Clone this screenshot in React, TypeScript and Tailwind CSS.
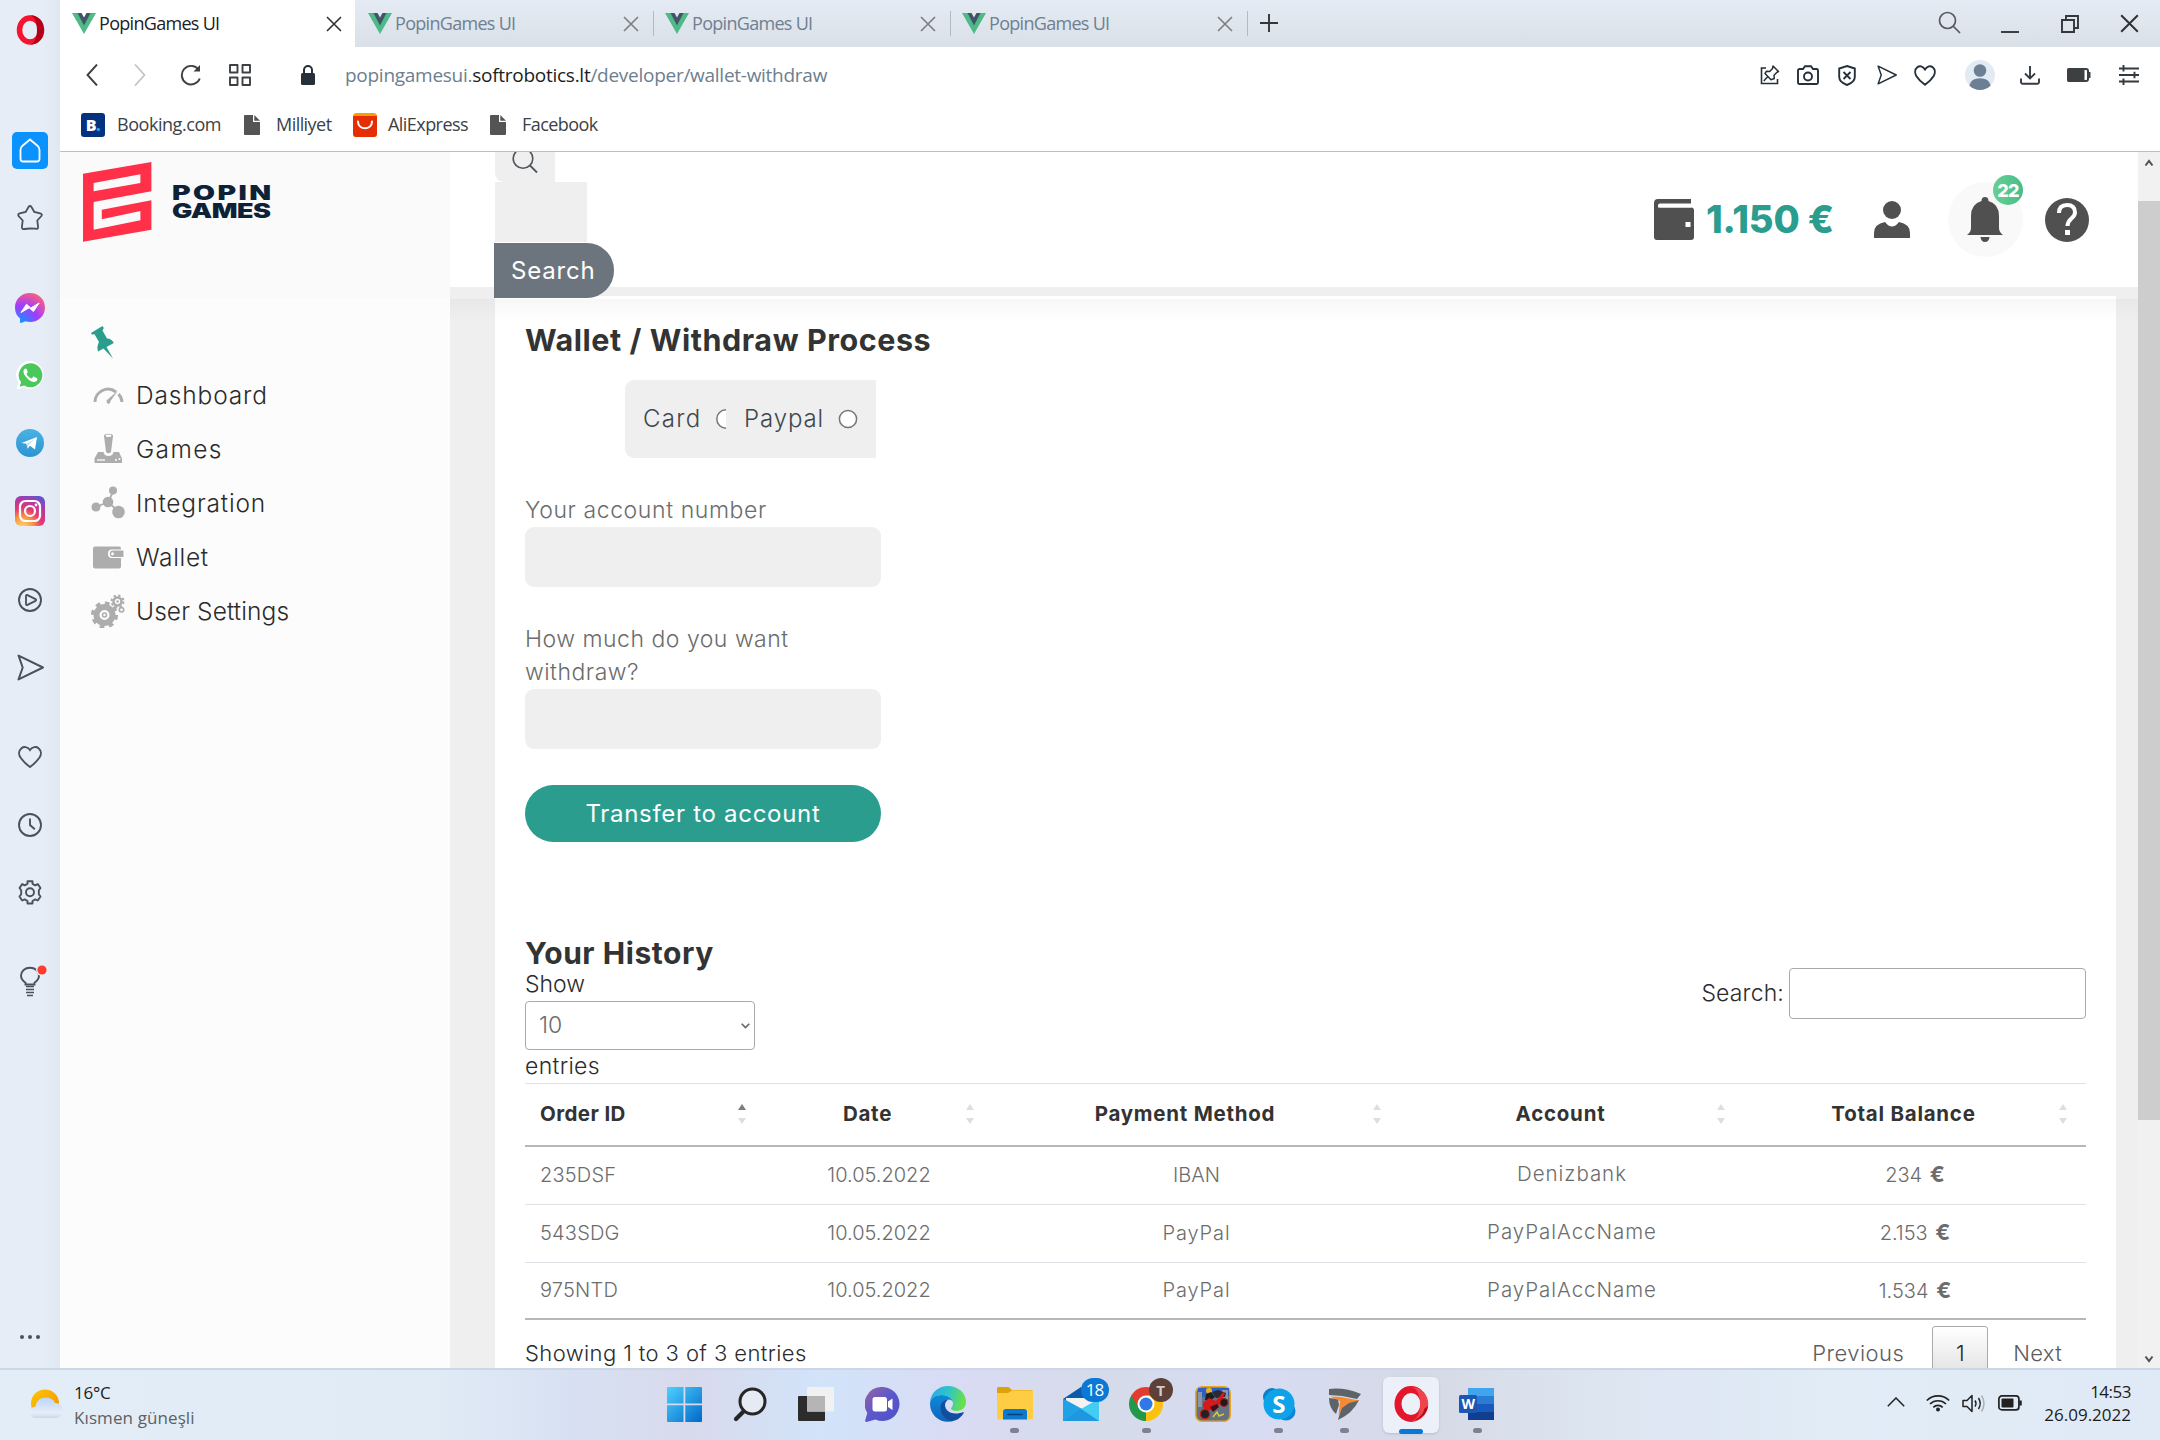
import React from "react";

type P = { w: number; h: number; vb?: string; className?: string; children: React.ReactNode };
const Svg = ({ w, h, vb, className = "", children }: P) => (
  <svg width={w} height={h} viewBox={vb ?? `0 0 ${w} ${h}`} className={`shrink-0 ${className}`} fill="none">
    {children}
  </svg>
);

const Vue = () => (
  <Svg w={24} h={21}>
    <path d="M0 0 12 21 24 0h-6l-6 10L6 0z" fill="#4dba87" />
    <path d="M5.500 0L12 12.500 18.500 0h-4L12 4.500 9.500 0z" fill="#435466" />
  </Svg>
);
const Close = ({ c, w = 1.6, s = 16 }: { c: string; w?: number; s?: number }) => (
  <Svg w={s} h={s} vb="0 0 16 16">
    <path d="M1 1l14 14M15 1L1 15" stroke={c} strokeWidth={w} />
  </Svg>
);
const FileIcon = ({ className = "" }: { className?: string }) => (
  <Svg w={16} h={20} className={className}>
    <path d="M1 0h8v7h7v12a1 1 0 0 1-1 1H1a1 1 0 0 1-1-1V1a1 1 0 0 1 1-1z" fill="#545454" />
    <path d="M10.300 0L16 5.800h-5.700z" fill="#545454" />
  </Svg>
);
const Plane = ({ s, w, c, className = "" }: { s: number; w: number; c: string; className?: string }) => (
  <Svg w={s} h={s} vb="0 0 26 26" className={className}>
    <path d="M1.500 1.500L25 13 1.500 24.500 5.500 13z" stroke={c} strokeWidth={w} strokeLinejoin="round" />
  </Svg>
);

function SideBar() {
  const c = "#48515d";
  return (
    <aside className="flex h-[1368px] w-[60px] shrink-0 flex-col items-center bg-linear-to-r from-[#e6edf6] from-70% to-[#dfe7f0]">
      <Svg w={30} h={30} className="mt-[15px]">
        <ellipse cx="15" cy="15" rx="10.500" ry="12" stroke="#f5132e" strokeWidth="5.500" />
        <path d="M15 .3c19 0 19 29.400 0 29.400 4.500-1 7-7 7-14.700S19.500 1.300 15 .3z" fill="#b5001a" />
      </Svg>
      <div className="mt-[87px] flex h-[37px] w-9 items-center justify-center rounded-[5px] bg-[#0a93ff]">
        <Svg w={22} h={25}>
          <path d="M11 1.500l7.500 6.300Q20.500 9.500 20.500 12v9a2.500 2.500 0 0 1-2.500 2.500H4A2.500 2.500 0 0 1 1.500 21v-9q0-2.500 2-4.200z" stroke="#fff" strokeWidth="1.800" />
        </Svg>
      </div>
      <Svg w={26} h={26} className="mt-9">
        <path d="M11.500 2q1.500-2 3 0l2.800 5 5.900 1.300q2.500.8 1.200 2.700L20.300 15.500l.8 6.500q0 2.500-2.500 1.700L13 23.500l-5.600.5q-2.500.5-2.500-2l.8-6.500L1.600 11q-1.200-2 1.200-2.700L8.700 7z" stroke={c} strokeWidth="1.800" />
      </Svg>
      <Svg w={30} h={30} className="mt-[62px]">
        <defs>
          <radialGradient id="msg" cx=".2" cy="1" r="1.150">
            <stop offset="0" stopColor="#0a99ff" />
            <stop offset=".5" stopColor="#a03cff" />
            <stop offset=".85" stopColor="#e8569c" />
            <stop offset="1" stopColor="#ff6b72" />
          </radialGradient>
        </defs>
        <path d="M15 0c8.700 0 15 6.200 15 14.500S23.700 29 15 29q-2.500 0-4.500-.7L6 30q-1 0-1-1v-3.500Q0 21.500 0 14.500C0 6.200 6.300 0 15 0z" fill="url(#msg)" />
        <path d="M6 19.500l5.500-8.300 4.200 3.800 8.500-5-5.800 8.500-4.200-3.700z" fill="#fff" stroke="#fff" strokeWidth="1" strokeLinejoin="round" />
      </Svg>
      <Svg w={29} h={29} className="mt-[38px]">
        <path d="M14.500 0a14 14 0 1 1-6.800 26.700L.5 28.500l1.900-7A14 14 0 0 1 14.500 0z" fill="#fff" />
        <path d="M14.500 2.300a12 12 0 1 1-6.300 22.300l-4.500 1.200 1.300-4.500A12 12 0 0 1 14.500 2.300z" fill="#4ac85c" />
        <path d="M10.800 8.200c-.7-1.200-1.700-.9-2.400-.1-1.700 1.900-.9 4.600.9 7 2.200 3 4.800 5.400 8 5.900 1.700.2 3.500-.6 4-2.200.3-1.200 0-1.500-.8-1.900l-2.300-1.200c-.7-.3-1 .1-1.900 1.300-.4.500-.9.500-1.500.2-1.900-.9-3.200-2.100-4.200-3.900-.4-.8 1.400-1.600 1.100-2.600z" fill="#fff" />
      </Svg>
      <Svg w={28} h={28} className="mt-[39px]">
        <defs>
          <linearGradient id="tg" x2="0" y2="1">
            <stop stopColor="#49b2e3" />
            <stop offset="1" stopColor="#2d94d1" />
          </linearGradient>
        </defs>
        <circle cx="14" cy="14" r="14" fill="url(#tg)" />
        <path d="M5.500 14L21 8l-2 12.500-5-3.700-2.500 3-1-5z" fill="#fff" />
        <path d="M10.500 15l8-5-6.300 6.300-.7 3.500z" fill="#c3dcec" />
      </Svg>
      <Svg w={30} h={30} className="mt-[39px]">
        <defs>
          <radialGradient id="ig" cx=".25" cy="1.050" r="1.150">
            <stop stopColor="#ffd870" />
            <stop offset=".3" stopColor="#fb9a41" />
            <stop offset=".55" stopColor="#e43a72" />
            <stop offset=".82" stopColor="#b138a5" />
            <stop offset="1" stopColor="#6055d0" />
          </radialGradient>
        </defs>
        <rect width="30" height="30" rx="6" fill="url(#ig)" />
        <rect x="5" y="5" width="20" height="20" rx="5.500" stroke="#fff" strokeWidth="2.200" />
        <circle cx="15" cy="15" r="5" stroke="#fff" strokeWidth="2.200" />
        <circle cx="21" cy="9" r="1.400" fill="#fff" />
      </Svg>
      <Svg w={24} h={24} className="mt-[62px]">
        <circle cx="12" cy="12" r="11" stroke={c} strokeWidth="1.900" />
        <path d="M8 8q0-1.500 1.500-.9l8 4q1.300.9 0 1.800l-8 4Q8 17.500 8 16z" stroke={c} strokeWidth="1.800" />
      </Svg>
      <Plane s={27} w={1.9} c={c} className="mt-[42px]" />
      <Svg w={24} h={22} className="mt-[65px]">
        <path d="M12 4C9.500.500 5.500.4 3.500 2.200.500 4.700.500 8.500 2.500 11.500 5 15 8.500 18.500 12 21c3.500-2.500 7-6 9.500-9.500 2-3 2-6.800-1-9.300C18.500.4 14.500.500 12 4z" stroke={c} strokeWidth="1.900" />
      </Svg>
      <Svg w={24} h={24} className="mt-[45px]">
        <circle cx="12" cy="12" r="11" stroke={c} strokeWidth="1.900" />
        <path d="M12 5.500V12l4.800 4.300" stroke={c} strokeWidth="1.900" />
      </Svg>
      <Svg w={24} h={25} className="mt-[43px]">
        <path d="M9.500 1.200h5v2.600l2.800 1.500 2.500-1.200L22.500 8l-1.700 2.300v3.900l1.700 2.300-2.700 4-2.500-1.100-2.800 1.600v2.500h-5v-2.500l-2.800-1.600-2.500 1.100-2.700-4 1.700-2.300v-3.900L1.500 8l2.700-3.900 2.500 1.200 2.800-1.500z" stroke={c} strokeWidth="1.900" strokeLinejoin="round" />
        <circle cx="12" cy="12.300" r="4" stroke={c} strokeWidth="1.900" />
      </Svg>
      <Svg w={36} h={33} className="mt-[60px]">
        <path d="M13.500 19.500v-1.700C11 16 9 13.700 9 10.800 9 6 13 2.800 18 2.800s9 3.200 9 8c0 2.900-2 5.200-4.500 7v1.700z" stroke={c} strokeWidth="1.900" />
        <path d="M14 21.500h8M14 24.500h8M14 27.500h8M15 30.500h6" stroke={c} strokeWidth="1.700" />
        <circle cx="30" cy="5" r="6" fill="#e5ecf5" />
        <circle cx="30" cy="5" r="4.600" fill="#ff3a2f" />
      </Svg>
      <Svg w={22} h={6} className="mt-[336px]">
        <circle cx="3" cy="3" r="2" fill={c} />
        <circle cx="11" cy="3" r="2" fill={c} />
        <circle cx="19" cy="3" r="2" fill={c} />
      </Svg>
    </aside>
  );
}

function TabStrip() {
  return (
    <div className="flex h-[47px] bg-linear-to-b from-[#e4ebf4] to-[#d9e0e7] text-[18px] tracking-[-0.7px]">
      <div className="flex w-[295px] items-center bg-white pl-3">
        <Vue />
        <span className="ml-[3px] flex-1 text-[#1c2126]">PopinGames UI</span>
        <Close c="#2f3337" />
        <span className="w-[13px]" />
      </div>
      {[0, 1, 2].map((i) => (
        <div key={i} className={i === 0 ? "flex w-[299px] items-center pl-[13px]" : "flex w-[297px] items-center pl-[11px]"}>
          <Vue />
          <span className="ml-[3px] flex-1 text-[#6f8092]">PopinGames UI</span>
          <Close c="#7a7e83" />
          <span className="ml-[14px] h-[25px] w-px bg-[#aebcc9]" />
        </div>
      ))}
      <div className="flex flex-1 items-center pl-[11px]">
        <Svg w={20} h={20} className="mb-px">
          <path d="M10 1v18M1 10h18" stroke="#33373b" strokeWidth="1.900" />
        </Svg>
        <span className="flex-1" />
        <Svg w={23} h={23} className="mb-[3px]">
          <circle cx="9.500" cy="9.500" r="8" stroke="#555a5f" strokeWidth="1.700" />
          <path d="M15 15l7 7" stroke="#555a5f" strokeWidth="1.700" />
        </Svg>
        <Svg w={18} h={18} className="ml-[40px]">
          <path d="M0 17h18" stroke="#33373b" strokeWidth="1.900" />
        </Svg>
        <Svg w={18} h={18} className="ml-[42px]">
          <path d="M1 5h12v12H1zM5 5V1h12v12h-4" stroke="#33373b" strokeWidth="1.900" />
        </Svg>
        <span className="ml-[41px] mr-[21px]">
          <Close c="#2f3337" w={1.7} s={19} />
        </span>
      </div>
    </div>
  );
}

function AddressBar() {
  const c = "#25303a";
  return (
    <div className="flex h-14 items-center pl-[26px] pr-[21px]">
      <Svg w={12} h={22}>
        <path d="M11 .500L1.500 11 11 21.500" stroke="#3c4043" strokeWidth="1.900" />
      </Svg>
      <Svg w={12} h={22} className="ml-9">
        <path d="M1 .500L10.500 11 1 21.500" stroke="#c3c3c3" strokeWidth="1.700" />
      </Svg>
      <Svg w={22} h={22} className="ml-[34px]">
        <path d="M18.500 5.500A9.300 9.300 0 1 0 19.800 14.500" stroke="#3c4043" strokeWidth="1.900" />
        <path d="M13.500 7.500H20V1z" fill="#3c4043" />
      </Svg>
      <Svg w={22} h={22} className="ml-[27px]">
        <path d="M1 1h7.500v7.500H1zM13.500 1H21v7.500h-7.500zM1 13.500h7.500V21H1zM13.500 13.500H21V21h-7.500z" stroke="#3c4043" strokeWidth="1.900" strokeLinejoin="round" />
      </Svg>
      <Svg w={14} h={20} className="ml-[50px]">
        <path d="M3 9V5a4 4 0 0 1 8 0v4" stroke={c} strokeWidth="2" />
        <rect y="8" width="14" height="12" rx="1.500" fill={c} />
      </Svg>
      <p className="ml-[30px] flex-1 text-[19px] tracking-[-0.27px] text-[#6c7e90]">
        popingamesui.<span className="text-[#1a1e22]">softrobotics.lt</span>/developer/wallet-withdraw
      </p>
      <Svg w={20} h={20}>
        <path d="M6 3H1.500v15.500h16V14" stroke={c} strokeWidth="1.600" />
        <path d="M13 1l5.500 5.500-1.500.7-3 3 .3 3.300L11 14.800 5 8.500l1.500-2.300 3.200.2 2.800-3zM8 11.300L3.800 16" stroke={c} strokeWidth="1.500" strokeLinejoin="round" />
      </Svg>
      <Svg w={22} h={20} className="ml-[17px]">
        <path d="M2.500 4H6l2-2.800h6L16 4h3.500a1.500 1.500 0 0 1 1.500 1.500v12a1.500 1.500 0 0 1-1.500 1.500h-17A1.500 1.500 0 0 1 1 17.500v-12A1.500 1.500 0 0 1 2.500 4z" stroke={c} strokeWidth="1.900" />
        <circle cx="11" cy="11.500" r="4" stroke={c} strokeWidth="1.900" />
      </Svg>
      <Svg w={18} h={21} className="ml-[19px]">
        <path d="M9 1l7.800 2.500V12c0 3.500-4 6.500-7.800 8-3.800-1.500-7.800-4.500-7.800-8V3.500z" stroke={c} strokeWidth="1.900" />
        <path d="M5.500 7l7 7M12.500 7l-7 7" stroke={c} strokeWidth="1.800" />
      </Svg>
      <Plane s={20} w={1.9} c={c} className="ml-[21px]" />
      <Svg w={22} h={21} className="ml-[17px]">
        <path d="M11 4.500C8.800 1 5.500.500 3.300 2.300.800 4.300.600 8 2.300 11c2 3.300 5.200 6.300 8.700 8.800 3.500-2.500 6.700-5.500 8.700-8.800 1.700-3 1.500-6.700-1-8.700C16.500.500 13.200 1 11 4.500z" stroke={c} strokeWidth="1.900" />
      </Svg>
      <Svg w={30} h={30} className="ml-[29px]">
        <circle cx="15" cy="15" r="15" fill="#e2eaf3" />
        <circle cx="15" cy="10.500" r="6.300" fill="#6c7f93" />
        <path d="M4.300 25.500Q6 18.300 15 18.300t10.700 7.200A15 15 0 0 1 4.300 25.500z" fill="#6c7f93" />
      </Svg>
      <Svg w={20} h={19} className="ml-[25px]">
        <path d="M10 0v12M5 7.500l5 5 5-5M1 12.500V16a1.800 1.800 0 0 0 1.800 1.800h14.400A1.800 1.800 0 0 0 19 16v-3.500" stroke="#333a41" strokeWidth="1.900" />
      </Svg>
      <Svg w={24} h={14} className="ml-[27px]">
        <rect x="1" y="1" width="20" height="12" rx="2" stroke="#3c4043" strokeWidth="2" />
        <rect x="0" y="0" width="17.500" height="14" rx="2" fill="#3c4043" />
        <path d="M22.500 4v6" stroke="#3c4043" strokeWidth="2" />
      </Svg>
      <Svg w={20} h={20} className="ml-[28px]">
        <path d="M0 3.500h20M0 10h20M0 16.500h20M4.500 0v6.500M15.500 6.800v6.400M4.500 13.500V20" stroke="#333a41" strokeWidth="1.900" />
      </Svg>
    </div>
  );
}

function Bookmarks() {
  return (
    <div className="flex h-[49px] items-center border-b border-[#b3c1cd] pb-[5px] pl-[21px] text-[18px] tracking-[-0.55px] text-[#3c4146]">
      <span className="flex h-6 w-6 items-center justify-center rounded-[3px] bg-[#04327f] text-[16px] font-extrabold text-white">
        B<span className="text-[#1fa2f5]">.</span>
      </span>
      <span className="ml-[12px] w-[127px] tracking-[-0.45px]">Booking.com</span>
      <FileIcon />
      <span className="ml-4 w-[77px]">Milliyet</span>
      <Svg w={24} h={24}>
        <rect width="24" height="24" rx="3.500" fill="#ff9a00" />
        <path d="M0 3h24v17.500a3.500 3.500 0 0 1-3.500 3.500h-17A3.500 3.500 0 0 1 0 20.500z" fill="#e62e04" />
        <path d="M5 8.500c0 9 14 9 14 0" stroke="#fff" strokeWidth="2" strokeLinecap="round" />
      </Svg>
      <span className="ml-[11px] w-[102px]">AliExpress</span>
      <FileIcon />
      <span className="ml-4">Facebook</span>
    </div>
  );
}

const g = "#adadad";
const navItems = [
  {
    t: "Dashboard",
    k: "tracking-[0.85px]",
    icon: (
      <Svg w={34} h={34}>
        <path d="M4 24a13 13 0 0 1 21-10M27.500 16A13 13 0 0 1 31 24" stroke={g} strokeWidth="3" />
        <path d="M16 25l-.5-2.500L27 12.500l-8.500 12z" fill={g} />
        <circle cx="17.500" cy="24" r="1.800" fill={g} />
      </Svg>
    ),
  },
  {
    t: "Games",
    k: "tracking-[1.4px]",
    icon: (
      <Svg w={34} h={34}>
        <path d="M13 4l2 16q2.500 2.500 5 0L22 4z" fill={g} />
        <ellipse cx="17.500" cy="4" rx="4.500" ry="2.300" fill={g} />
        <ellipse cx="17.500" cy="3.800" rx="3" ry="1.200" fill="#fff" />
        <path d="M7 20h5.500q.5 4 5 4t5-4H28l3 6.500V31H3.500v-4.500z" fill={g} />
        <path d="M6 28h8" stroke="#fff" strokeWidth="1.300" />
        <circle cx="25" cy="28" r="1" fill="#fff" />
        <circle cx="28.500" cy="27" r="1" fill="#fff" />
      </Svg>
    ),
  },
  {
    t: "Integration",
    k: "tracking-[0.8px]",
    icon: (
      <Svg w={34} h={34}>
        <path d="M5 21l12-5 5.500-11M17 16l11 10" stroke={g} strokeWidth="1.800" />
        <circle cx="5" cy="21" r="4.500" fill={g} />
        <circle cx="17" cy="16" r="5.300" fill={g} />
        <circle cx="22" cy="4.500" r="4" fill={g} />
        <circle cx="27.500" cy="26" r="6.300" fill={g} />
      </Svg>
    ),
  },
  {
    t: "Wallet",
    k: "tracking-[0.65px]",
    icon: (
      <Svg w={34} h={34}>
        <rect x="2" y="6.500" width="28" height="22" rx="2" fill={g} />
        <rect x="17" y="9.500" width="17" height="8.500" rx="4" fill="#fff" />
        <path d="M22 10.500h10.500v6.500H22a3.200 3.200 0 0 1 0-6.500z" fill={g} />
        <circle cx="21.500" cy="13.800" r="1.500" fill="#fff" />
      </Svg>
    ),
  },
  {
    t: "User Settings",
    k: "tracking-[0.1px]",
    icon: (
      <Svg w={34} h={34}>
        <circle cx="13.500" cy="21" r="8" stroke={g} strokeWidth="6" />
        <circle cx="13.500" cy="21" r="11.800" stroke={g} strokeWidth="3.500" strokeDasharray="4.700 4.570" />
        <circle cx="13.500" cy="21" r="2" stroke={g} strokeWidth="1.500" />
        <circle cx="26.500" cy="7.500" r="4" stroke={g} strokeWidth="2.600" />
        <circle cx="26.500" cy="7.500" r="6" stroke={g} strokeWidth="2" strokeDasharray="2.350 2.360" />
        <circle cx="26.500" cy="7.500" r="1.200" fill={g} />
        <circle cx="30.500" cy="15.800" r="2.200" stroke={g} strokeWidth="1.600" />
      </Svg>
    ),
  },
];

function SiteNav() {
  return (
    <nav className="flex w-[390px] shrink-0 flex-col bg-[#fcfcfc]">
      <div className="flex h-[146px] shrink-0 bg-[#fafafa] pl-[22.6px] pt-[9.5px]">
        <Svg w={69} h={80}>
          <path
            fillRule="evenodd"
            fill="#ff3048"
            d="M0 11.700L68.400 0v29.300L10.600 40v27.700l46.800-9.400V49l-38.600 8.300v-9.600l49.600-9.400v29.400L0 79.700zM10.600 21v8.300L57.400 21v-8.700z"
          />
        </Svg>
        <div className="ml-5 mt-[22px] flex flex-col text-[20px] leading-[18.500px] font-black text-[#0d2237]">
          <span className="h-[18.500px] w-[70px] origin-left scale-x-[1.420] tracking-[1.700px]">POPIN</span>
          <span className="h-[18.500px] w-[70px] origin-left scale-x-[1.350] tracking-[-0.4px]">GAMES</span>
        </div>
      </div>
      <Svg w={24} h={33} className="ml-[31px] mt-[28px]">
        <path d="M0 7L11.500 0l1.300 2-1.300 2.500 4.500 8q4.500 0 6.800 4.500L15.500 21 22 32.500 12.500 22.500 7 25.500q-1.500-5 1-9.500L3.500 8.300.800 8.500z" fill="#2a9d8f" />
      </Svg>
      <ul className="mt-[9px] pl-[31px]">
        {navItems.map((n) => (
          <li key={n.t} className="flex h-[54px] items-center text-[24.500px] font-[350] text-[#2b2b2b]">
            {n.icon}
            <span className={`ml-[11px] ${n.k}`}>{n.t}</span>
          </li>
        ))}
      </ul>
    </nav>
  );
}

function SiteHeader() {
  const c = "#505050";
  return (
    <header className="relative z-10 flex h-[135px] shrink-0 bg-white">
      <div className="ml-[45px] w-[120px]">
        <div className="flex h-[30px] w-[60px] overflow-hidden rounded-bl-[9px] bg-[#efefef]">
          <Svg w={26} h={26} className="-mt-[4px] ml-[17px]">
            <circle cx="11" cy="10.500" r="9.800" stroke="#50565c" strokeWidth="1.600" />
            <path d="M18 17.500l7 7" stroke="#50565c" strokeWidth="1.800" />
          </Svg>
        </div>
        <div className="h-[60px] w-[92px] bg-[#efefef]" />
        <button className="-ml-px mt-px flex h-[55px] w-[120px] items-center rounded-r-[27px] bg-[#6c757d] pl-[17px] text-[24px] tracking-[0.8px] text-white">
          Search
        </button>
      </div>
      <div className="ml-auto flex h-[135px] items-center">
        <Svg w={40} h={41}>
          <path d="M4 0h33v4.500H6q-2 0-2 2v2H37q3 0 3 3V38q0 3-3 3H3q-3 0-3-3V4q0-4 4-4z" fill={c} />
          <path d="M5.500 5.500H37v3H5.500z" fill="#fff" />
          <rect x="31.500" y="23" width="5" height="5" fill="#fff" />
        </Svg>
        <span className="ml-[12px] w-[130px] whitespace-nowrap text-[38px] font-extrabold tracking-[-0.2px] text-[#2a9d8f]">1.150 €</span>
        <Svg w={36} h={37} className="ml-[38px]">
          <ellipse cx="18" cy="9" rx="9" ry="9" fill={c} />
          <path d="M0 37v-5q0-9 11-11 7 9 14 0 11 2 11 11v5z" fill={c} />
        </Svg>
        <div className="relative ml-[38px] flex h-[75px] w-[75px] items-center justify-center rounded-full bg-[#f9f9f9]">
          <Svg w={36} h={45} className="mr-[2px]">
            <path d="M18 0q3.500 0 3.500 4Q32 7 32 19v12q0 4 4 7H0q4-3 4-7V19Q4 7 14.500 4q0-4 3.500-4zM13.500 40h9q-.5 5-4.500 5t-4.500-5z" fill={c} />
          </Svg>
          <span className="absolute -top-[7px] right-0 flex h-[30px] w-[30px] items-center justify-center rounded-full bg-linear-to-r from-[#68d08f] to-[#45bd8c] text-[18px] font-extrabold tracking-[-0.8px] text-white">
            22
          </span>
        </div>
        <span className="ml-[22px] mr-[49px] flex h-11 w-11 items-center justify-center rounded-full bg-[#505050]">
          <Svg w={20} h={34}>
            <path d="M2 10q0-8 8-8t8 7.500c0 6-7.500 5.500-7.500 13.500" stroke="#fff" strokeWidth="4" />
            <rect x="8" y="27" width="5" height="5" fill="#fff" />
          </Svg>
        </span>
      </div>
    </header>
  );
}

const Sort = ({ active = false }: { active?: boolean }) => (
  <Svg w={8} h={20}>
    <path d="M4 0l4 6H0z" fill={active ? "#7d7d7d" : "#dedede"} />
    <path d="M4 20l4-6H0z" fill="#dedede" />
  </Svg>
);

const heads = ["Order ID", "Date", "Payment Method", "Account", "Total Balance"];
const rows = [
  ["235DSF", "10.05.2022", "IBAN", "Denizbank", "234"],
  ["543SDG", "10.05.2022", "PayPal", "PayPalAccName", "2.153"],
  ["975NTD", "10.05.2022", "PayPal", "PayPalAccName", "1.534"],
];

function History() {
  return (
    <section>
      <h2 className="mt-24 h-[30px] text-[30px] leading-[30px] font-bold tracking-[0.550px] text-[#333]">Your History</h2>
      <div className="flex justify-between text-[23px] font-[350] text-[#2b2b2b]">
        <div className="w-[230px]">
          <div className="h-[33px] leading-[33px]">Show</div>
          <div className="flex h-[49px] items-center justify-between rounded-[4px] border border-[#aaa] pl-[13px] pr-1 text-[#6c6c6c]">
            10
            <Svg w={9} h={6}>
              <path d="M.7.8l3.800 3.800L8.300.8" stroke="#666" strokeWidth="1.600" />
            </Svg>
          </div>
          <div className="h-[32px] leading-[32px] tracking-[0.3px]">entries</div>
        </div>
        <div className="flex h-[51px] items-center">
          <span className="tracking-[0.150px]">Search:</span>
          <div className="ml-[5px] h-[51px] w-[297px] rounded-[4px] border border-[#aaa]" />
        </div>
      </div>
      <div className="mt-px text-[20px] font-[350]">
        <div className="grid h-[64px] grid-cols-[240px_228px_407px_344px_342px] border-t border-b-2 border-t-[#dee2e6] border-b-[#b7b7b7] text-[20.500px] font-bold tracking-[0.750px] text-[#333]">
          {heads.map((h, i) => (
            <div key={h} className={i === 0 ? "flex items-center justify-between pb-px pl-[15px] pr-[19px] tracking-[0.4px]" : "flex items-center justify-between pb-px pl-1 pr-[19px]"}>
              <span className={i === 0 ? "" : "flex-1 text-center"}>{h}</span>
              <Sort active={i === 0} />
            </div>
          ))}
        </div>
        {rows.map((r, i) => (
          <div
            key={r[0]}
            className={
              i === 2
                ? "grid h-[57px] grid-cols-[240px_228px_407px_344px_342px] items-center border-b-2 border-[#b7b7b7] pb-px text-[#6c6c6c]"
                : "grid h-[58px] grid-cols-[240px_228px_407px_344px_342px] items-center border-b border-[#dee2e6] pb-[2px] text-[#6c6c6c]"
            }
          >
            <span className="pl-[15px] tracking-[0.2px]">{r[0]}</span>
            <span className="text-center">{r[1]}</span>
            <span className={r[2] === "IBAN" ? "text-center" : "text-center tracking-[0.9px]"}>{r[2]}</span>
            <span className="text-center text-[20.500px] tracking-[0.950px]">{r[3]}</span>
            <span className="text-center">
              {r[4]} <b className="ml-0.5 text-[22px]">€</b>
            </span>
          </div>
        ))}
      </div>
      <div className="flex h-[66px] items-center text-[22px] font-[350] text-[#2b2b2b]">
        <span className="flex-1 tracking-[0.4px]">Showing 1 to 3 of 3 entries</span>
        <span className="tracking-[0.450px] text-[#5c5c5c]">Previous</span>
        <span className="ml-7 mt-[6px] flex h-[60px] w-[56px] items-center justify-center rounded-[3px] border border-[#aaa] bg-linear-to-b from-white to-[#dcdcdc] pb-[6px]">
          1
        </span>
        <span className="ml-[25px] mr-6 tracking-[0.3px] text-[#5c5c5c]">Next</span>
      </div>
    </section>
  );
}

function Content() {
  return (
    <main className="ml-[45px] mr-[22px] mt-[9px] h-[1080px] overflow-hidden bg-white pl-[30px] pr-[30px]">
      <h1 className="mt-[22px] h-11 text-[30.500px] leading-[44px] font-bold tracking-[0.550px] text-[#333]">Wallet / Withdraw Process</h1>
      <div className="ml-[100px] mt-[18px] flex h-[78px] w-[251px] items-center rounded-l-[9px] bg-[#efefef] pl-[18px] text-[24px] font-[350] text-[#40474d]">
        <span className="w-[73px] tracking-[1.3px]">Card</span>
        <span className="w-[10px] overflow-hidden">
          <Svg w={20} h={20}>
            <circle cx="10" cy="10" r="9.200" fill="#fff" stroke="#767676" strokeWidth="1.500" />
          </Svg>
        </span>
        <span className="ml-[18px] w-[94px] tracking-[0.9px]">Paypal</span>
        <Svg w={20} h={20}>
          <circle cx="10" cy="10" r="8.600" fill="#fff" stroke="#767676" strokeWidth="1.500" />
        </Svg>
      </div>
      <div className="w-[356px] text-[23px] font-[350] tracking-[0.600px] text-[#6c6c6c]">
        <div className="mt-[35px] h-[34px] leading-[34px]">Your account number</div>
        <div className="h-[60px] rounded-[9px] bg-[#efefef]" />
        <div className="mt-9 leading-[33px] tracking-[0.5px]">
          How much do you want
          <br />
          withdraw?
        </div>
        <div className="h-[60px] rounded-[9px] bg-[#efefef]" />
        <button className="mt-9 flex h-[57px] w-full items-center justify-center rounded-full bg-[#2a9d8f] text-[24px] font-normal tracking-[0.7px] text-white">
          Transfer to account
        </button>
      </div>
      <History />
    </main>
  );
}

function Scrollbar() {
  return (
    <div className="flex h-[1216px] w-[22px] shrink-0 flex-col items-center bg-[#f1f1f1]">
      <Svg w={10} h={8} className="mt-[7px]">
        <path d="M1.500 6.500L5 2l3.500 4.500" stroke="#505050" strokeWidth="2" />
      </Svg>
      <div className="mt-[34px] h-[919px] w-full bg-[#cdcdcd]" />
      <Svg w={10} h={8} className="mt-[235px]">
        <path d="M1.500 1.500L5 6l3.500-4.500" stroke="#505050" strokeWidth="2" />
      </Svg>
    </div>
  );
}

const Slot = ({ children, dot = false, active = false }: { children: React.ReactNode; dot?: boolean; active?: boolean }) => (
  <div className="flex w-[66.1px] flex-col items-center">
    <div className={active ? "mt-[9px] flex h-[56px] w-[56px] flex-col items-center rounded-[6px] bg-[#ecf0f8] pt-[9px] shadow-sm" : "mt-[18px] flex h-[47px] flex-col items-center"}>
      <div className="relative flex h-9 w-9 items-center justify-center">{children}</div>
      {active && <span className="mt-[7px] h-[5px] w-6 shrink-0 rounded-full bg-[#0a78d4]" />}
      {dot && <span className="mt-[7px] h-[5px] w-[9px] shrink-0 rounded-full bg-[#7d8190]" />}
    </div>
  </div>
);

function Taskbar() {
  return (
    <footer className="flex h-[72px] border-t-2 border-[#cbd6e6] bg-[linear-gradient(90deg,#e3edf7_0%,#e0ebf6_20%,#d7e0f2_27%,#d8daec_32%,#d2e3fa_38%,#d9dbf3_45%,#d6dbea_51%,#d6dcf3_58%,#d6d9e6_66%,#dce4f0_73%,#e1ecf7_85%,#dfeaf6_100%)]">
      <Svg w={34} h={30} className="ml-[30px] mt-[19px]">
        <defs>
          <linearGradient id="cl" x2="0" y2="1">
            <stop stopColor="#bcd4fa" />
            <stop offset=".75" stopColor="#e8eef7" />
            <stop offset="1" stopColor="#c9d6ea" />
          </linearGradient>
          <linearGradient id="sun" x2="1" y2="1">
            <stop stopColor="#ffc800" />
            <stop offset="1" stopColor="#f08c00" />
          </linearGradient>
        </defs>
        <circle cx="15" cy="14.500" r="14" fill="url(#sun)" />
        <path d="M6 29a5.500 5.500 0 0 1-.5-11.500Q7 8.500 15.500 8.500q7.500 0 9.500 5.500a7.500 7.500 0 1 1 1 15z" fill="url(#cl)" />
      </Svg>
      <div className="ml-[10px] mt-[10px] w-[583px] text-[17px] leading-[25px] text-[#1c1c1c]">
        <div className="tracking-[-0.2px]">16°C</div>
        <div className="tracking-[0.1px] text-[#5d6165]">Kısmen güneşli</div>
      </div>
      <div className="-ml-[6px] -mt-0.5 flex">
        <Slot>
          <Svg w={35} h={35}>
            <defs>
              <linearGradient id="win" x2="1" y2="1">
                <stop stopColor="#4fd0ff" />
                <stop offset="1" stopColor="#0069c9" />
              </linearGradient>
            </defs>
            <path d="M1 0h15.500v16.500H0V1a1 1 0 0 1 1-1zM18.300 0H34a1 1 0 0 1 1 1v15.500H18.300zM0 18.300h16.500V35H1a1 1 0 0 1-1-1zM18.300 18.300H35V34a1 1 0 0 1-1 1H18.300z" fill="url(#win)" />
          </Svg>
        </Slot>
        <Slot>
          <Svg w={34} h={35}>
            <circle cx="19.500" cy="14.500" r="12.500" stroke="#262626" strokeWidth="3" fill="#e6eaf3" />
            <path d="M10.500 24.500L3 32" stroke="#262626" strokeWidth="4.200" strokeLinecap="round" />
          </Svg>
        </Slot>
        <Slot>
          <Svg w={36} h={35}>
            <rect x="0" y="9" width="27" height="25" rx="1" fill="#2c2c2c" />
            <rect x="9" y="0" width="27" height="24.500" rx="1" fill="#f1f1f1" />
            <path d="M9 9h18v15.500H9z" fill="#b5b5b5" />
          </Svg>
        </Slot>
        <Slot>
          <Svg w={35} h={35}>
            <defs>
              <linearGradient id="chat" x1="0" x2="1" y2="1">
                <stop stopColor="#9a63a0" />
                <stop offset=".5" stopColor="#5c57cc" />
                <stop offset="1" stopColor="#4a52c4" />
              </linearGradient>
            </defs>
            <path d="M17.500 0a17 17 0 1 1-7 32.500L1.500 35q-1.800 0-1.200-2l2-7A17 17 0 0 1 17.500 0z" fill="url(#chat)" />
            <rect x="7.500" y="10" width="14.500" height="14.500" rx="2.500" fill="#fff" />
            <path d="M23 14.500l4.500-3v11.500l-4.500-3z" fill="#fff" />
          </Svg>
        </Slot>
        <Slot>
          <Svg w={36} h={36}>
            <defs>
              <linearGradient id="e1" x2="1" y2=".2">
                <stop stopColor="#2aa7e8" />
                <stop offset=".55" stopColor="#2fc5c8" />
                <stop offset="1" stopColor="#68e04b" />
              </linearGradient>
              <linearGradient id="e2" x2="0" y2="1">
                <stop stopColor="#0c8ad8" />
                <stop offset="1" stopColor="#1062bd" />
              </linearGradient>
            </defs>
            <path d="M0 16C1 6 9 0 18 0c10 0 18 7 18 15.500 0 6-4 9.500-9 9.500-3.500 0-6-1-6-2.500 0-1 2-2 2-5C23 13 18 9 12 9 6 9 1.500 11.500 0 16z" fill="url(#e1)" />
            <path d="M0 18C0 12 5.500 9 11.500 9 18 9 23 13 23 17q0-3-4-3.500c-5 0-8 4-7.500 9.500C12.500 30 18 34 24 34.800 12 39 0 30 0 18z" fill="url(#e2)" />
            <path d="M10.500 21c0-4 3.500-7.500 8-7.500-2 1-3.500 3-3.500 5.500 0 5 5 8.500 10.500 8.500 3.500 0 5.500-.7 7.500-1.300 1 0 1 .7.500 1.300A17 17 0 0 1 22 35.300C15 34 10.500 28 10.500 21z" fill="#0f4f9e" />
          </Svg>
        </Slot>
        <Slot dot>
          <Svg w={36} h={33}>
            <path d="M0 1.500Q0 0 1.500 0h9.300q1.200 0 2 1l2 2H34q2 0 2 2v5H0z" fill="#dda20a" />
            <path d="M0 6h11l4-2.500h21V31q0 1.500-1.500 1.500h-33Q0 32.500 0 31z" fill="#ffcd43" />
            <path d="M6 32.500V25q0-3 3-3h18q3 0 3 3v7.500z" fill="#0b79cd" />
            <path d="M11 27.500h14" stroke="#07427e" strokeWidth="1.600" strokeLinecap="round" />
          </Svg>
        </Slot>
        <Slot>
          <Svg w={36} h={35}>
            <path d="M0 12L18 0l18 12v8H0z" fill="#0a5cab" />
            <path d="M3 11h30v11H3z" fill="#f3f3f3" />
            <path d="M0 11.500l21 11.500L36 34H0z" fill="#21a1e5" />
            <path d="M36 11.500V34L18 22z" fill="#43cdf5" />
            <path d="M0 34l18-12 18 12z" fill="#1f97e0" />
          </Svg>
          <span className="absolute -top-[8px] left-[18px] flex h-6 w-7 items-center justify-center rounded-full bg-[#0a78d4] text-[17px] tracking-[-0.8px] text-white">18</span>
        </Slot>
        <Slot dot>
          <Svg w={34} h={34} className="-ml-[1px]">
            <path d="M17 17L2.300 8.500A17 17 0 0 1 31.700 8.500z" fill="#e33b2e" />
            <path d="M17 17L2.300 8.500A17 17 0 0 0 17 34l7-12z" fill="#23984a" />
            <path d="M17 17l0 17A17 17 0 0 0 31.700 8.500H18z" fill="#fcc010" />
            <path d="M2.300 8.500L9.500 20.500 17 17V8.500z" fill="#e33b2e" />
            <circle cx="17" cy="17" r="8.500" fill="#fff" />
            <circle cx="17" cy="17" r="6.500" fill="#2f78e8" />
          </Svg>
          <span className="absolute -top-[8px] left-5 flex h-6 w-6 items-center justify-center rounded-full bg-[#5d4038] text-[15px] font-bold text-[#d5cbc8]">T</span>
        </Slot>
        <Slot>
          <Svg w={36} h={36}>
            <rect x=".8" y=".8" width="34.400" height="34.400" rx="6" fill="#65717e" stroke="#e9a528" strokeWidth="1.600" />
            <path d="M3 2h31v8L20 9 3 12z" fill="#2d5fc4" />
            <path d="M3 6h4v15H3zM27 4h6v9h-6z" fill="#8a97a8" />
            <path d="M17 6l6-2 8 3-1 4-9 1z" fill="#2a2a30" />
            <circle cx="14" cy="4.800" r="3" fill="#e8b21d" />
            <path d="M11 8l5-2 4 5-5 4-5-1z" fill="#1d1f22" />
            <path d="M8 17l6-5 7 3 7-9 2 1-5 11-7 7-3-1-5 1-2-4z" fill="#d51a1e" />
            <path d="M15 21l7-3 2 3-6 5z" fill="#3a1414" />
            <circle cx="10" cy="28" r="4.600" fill="#222" stroke="#c71b1b" strokeWidth="1.300" />
            <circle cx="29" cy="16.500" r="3.800" fill="#2a1515" stroke="#8c1c1c" strokeWidth="1.200" />
            <path d="M18 31l4-5 2 4 5-2" stroke="#d7cf37" strokeWidth="1.400" />
          </Svg>
        </Slot>
        <Slot dot>
          <Svg w={34} h={34}>
            <circle cx="10" cy="10" r="9" fill="#0a7fc4" />
            <circle cx="24" cy="24" r="9.500" fill="#0a86d8" />
            <circle cx="17" cy="17" r="15.500" fill="#0da3e8" />
          </Svg>
          <span className="absolute inset-0 flex items-center justify-center text-[24px] font-bold text-white">S</span>
        </Slot>
        <Slot dot>
          <Svg w={34} h={32}>
            <path d="M1 1q15-2 32 5l-4 5-15-3-13-1z" fill="#5c6468" />
            <path d="M1 10l9 1 1 6-3 9Q1 20 1 10z" fill="#5c6468" />
            <path d="M31 12q-6 13-21 20l4-14 9-5z" fill="#5c6468" />
            <path d="M2 8.500l11 .5 18 3.500-10 2.500-7 5-3.500 8 1.500-15z" fill="#f58a35" />
          </Svg>
        </Slot>
        <Slot active>
          <Svg w={36} h={36}>
            <ellipse cx="18" cy="18" rx="13" ry="14.500" stroke="#e3162b" strokeWidth="7" />
            <path d="M18 1c23 0 23 34 0 34 6-1 9-8 9-17S24 2 18 1z" fill="#f0444d" />
            <path d="M22 33.500q8-3.500 9.500-11L35 20q-1 9-11 14z" fill="#b50b1d" />
          </Svg>
        </Slot>
        <Slot dot>
          <Svg w={36} h={34}>
            <path d="M9 1h26v8H9z" fill="#41a5ee" />
            <path d="M9 9h26v8H9z" fill="#2b7cd3" />
            <path d="M9 17h26v8H9z" fill="#185abd" />
            <path d="M9 25h26v8H9z" fill="#103f91" />
            <rect x="0" y="8" width="18" height="18" rx="1.500" fill="#1b57b5" />
          </Svg>
          <span className="absolute left-0 top-[9px] w-[18px] text-center text-[14px] leading-[18px] font-bold text-white">W</span>
        </Slot>
      </div>
      <div className="ml-auto flex items-start">
        <Svg w={18} h={10} className="mt-[27px]">
          <path d="M.8 9.200L9 1l8.200 8.200" stroke="#222" strokeWidth="1.500" />
        </Svg>
        <Svg w={24} h={18} className="ml-[21px] mt-[24px]">
          <path d="M.8 6.500a16 16 0 0 1 22.400 0M4 10a11.500 11.500 0 0 1 16 0M7.300 13.300a6.800 6.800 0 0 1 9.400 0" stroke="#222" strokeWidth="1.700" />
          <circle cx="12" cy="15.500" r="2" fill="#222" />
        </Svg>
        <Svg w={24} h={20} className="ml-3 mt-[24px]">
          <path d="M1 6.500h4l5-5v16l-5-5H1z" stroke="#222" strokeWidth="1.500" strokeLinejoin="round" />
          <path d="M13 6.500q2 3 0 6M16.500 4q3.500 5.500 0 11" stroke="#222" strokeWidth="1.500" />
          <path d="M19.500 1.500q5 8 0 16" stroke="#a9b2bb" strokeWidth="1.500" />
        </Svg>
        <Svg w={24} h={16} className="ml-3 mt-[25px]">
          <rect x=".9" y=".9" width="20" height="14" rx="3" stroke="#222" strokeWidth="1.700" />
          <rect x="3.500" y="3.500" width="12" height="9" rx="1" fill="#222" />
          <path d="M22.500 5.500v5" stroke="#222" strokeWidth="2.500" />
        </Svg>
        <div className="mr-[29px] mt-[10px] w-[109px] text-right text-[17px] leading-[23px] text-[#1c1c1c]">
          <span className="tracking-[-0.5px]">14:53</span>
          <br />
          26.09.2022
        </div>
      </div>
    </footer>
  );
}

export default function App() {
  return (
    <div className="h-[1440px] w-[2160px] overflow-hidden bg-white font-['Open_Sans',sans-serif]">
      <div className="flex h-[1368px]">
        <SideBar />
        <div className="flex w-[2100px] flex-col">
          <TabStrip />
          <AddressBar />
          <Bookmarks />
          <div className="flex h-[1216px] overflow-hidden font-['Inter',sans-serif]">
            <SiteNav />
            <div className="relative flex w-[1688px] flex-col bg-[#efefef]">
              <SiteHeader />
              <Content />
              <div className="pointer-events-none absolute inset-x-0 top-[147px] h-6 bg-linear-to-b from-black/3 to-transparent" />
            </div>
            <Scrollbar />
          </div>
        </div>
      </div>
      <Taskbar />
    </div>
  );
}
